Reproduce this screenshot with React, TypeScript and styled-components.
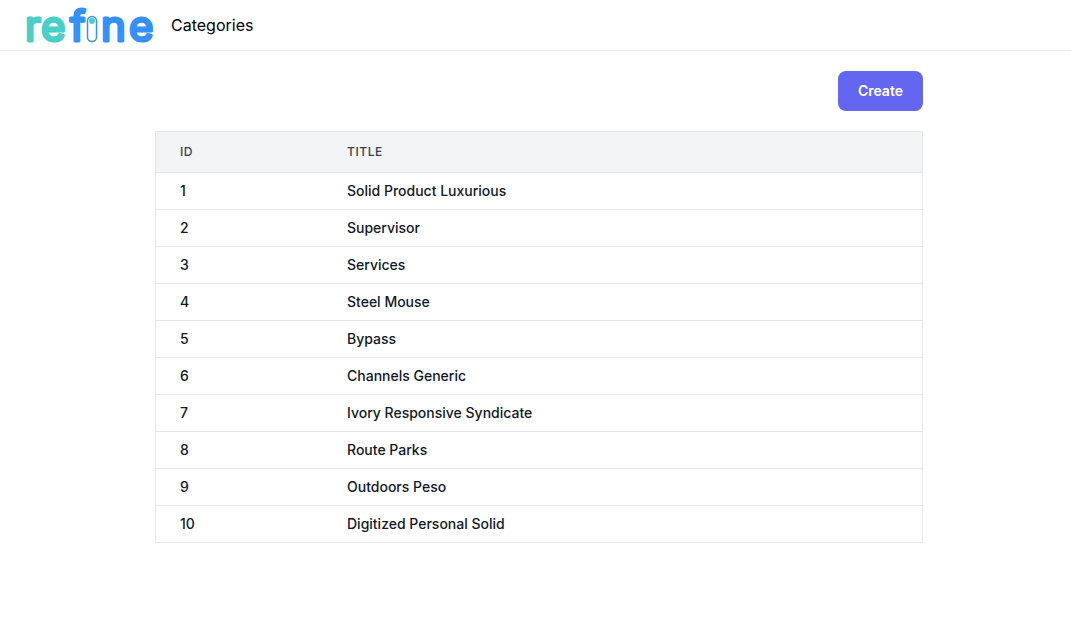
import React from "react";
import styled, { createGlobalStyle } from "styled-components";

const GlobalStyle = createGlobalStyle`
  *, *::before, *::after { box-sizing: border-box; }
  body {
    margin: 0;
    background: #ffffff;
    color: #000000;
    font-family: Inter, "Liberation Sans", sans-serif;
    font-size: 16px;
    line-height: 24px;
  }
`;

const NavBar = styled.nav`
  display: flex;
  align-items: center;
  gap: 16px;
  min-height: 51px;
  padding: 0 24px;
  border-bottom: 1px solid #e5e7eb;
`;

const HomeLink = styled.a`
  display: flex;
`;

const LogoSvg = styled.svg`
  display: block;
  overflow: visible;
`;

const Wordmark = styled.text`
  font-family: Inter, sans-serif;
  font-size: 42px;
  font-weight: 400;
  fill: currentColor;
  stroke: currentColor;
  stroke-width: 3;
  stroke-linejoin: round;
`;

const NavLink = styled.a`
  color: #000000;
  text-decoration: none;
`;

const Main = styled.main`
  padding: 20px 0 20px 7px;
`;

const Container = styled.div`
  display: flex;
  flex-direction: column;
  gap: 20px;
  max-width: 768px;
  margin: 0 auto;
`;

const CreateButton = styled.button`
  align-self: flex-end;
  height: 40px;
  padding: 0 20px;
  border: 0;
  border-radius: 8px;
  background: #6366f1;
  color: #ffffff;
  font: 600 14px/20px Inter, "Liberation Sans", sans-serif;
  cursor: pointer;
`;

const Table = styled.table`
  width: 100%;
  border: 1px solid #e5e7eb;
  border-spacing: 0;
  text-align: left;
`;

const HeaderCell = styled.th<{ $narrow?: boolean }>`
  width: ${(p) => (p.$narrow ? "167px" : "auto")};
  height: 41px;
  padding: 0 24px;
  border-bottom: 1px solid #e5e7eb;
  background: #f3f4f6;
  color: #374151;
  font-size: 12px;
  font-weight: 500;
  line-height: 16px;
  letter-spacing: 0.05em;
  text-transform: uppercase;
`;

const Row = styled.tr`
  &:not(:last-child) > td {
    border-bottom: 1px solid #e5e7eb;
  }
`;

const Cell = styled.td`
  padding: 8px 24px;
  color: #111827;
  font-size: 14px;
  font-weight: 500;
  line-height: 20px;
`;

const categories = [
  "Solid Product Luxurious",
  "Supervisor",
  "Services",
  "Steel Mouse",
  "Bypass",
  "Channels Generic",
  "Ivory Responsive Syndicate",
  "Route Parks",
  "Outdoors Peso",
  "Digitized Personal Solid",
].map((title, index) => ({ id: index + 1, title }));

function Logo() {
  return (
    <LogoSvg width="131" height="50" viewBox="0 0 131 50" role="img" aria-label="refine">
      <Wordmark color="#47d0c7" x="1 17" y="41">re</Wordmark>
      <Wordmark color="#3490fb" x="46 77 105" y="41">fne</Wordmark>
      <rect x="63.5" y="16.5" width="9" height="25" rx="4.5" fill="#ffffff" stroke="#3490fb" strokeWidth="1.5" />
      <circle cx="68" cy="21" r="3" fill="#47d0c7" />
    </LogoSvg>
  );
}

export default function App() {
  return (
    <>
      <GlobalStyle />
      <NavBar>
        <HomeLink href="#">
          <Logo />
        </HomeLink>
        <NavLink href="#categories">Categories</NavLink>
      </NavBar>
      <Main>
        <Container>
          <CreateButton type="button">Create</CreateButton>
          <Table>
            <thead>
              <tr>
                <HeaderCell scope="col" $narrow>ID</HeaderCell>
                <HeaderCell scope="col">Title</HeaderCell>
              </tr>
            </thead>
            <tbody>
              {categories.map((category) => (
                <Row key={category.id}>
                  <Cell>{category.id}</Cell>
                  <Cell>{category.title}</Cell>
                </Row>
              ))}
            </tbody>
          </Table>
        </Container>
      </Main>
    </>
  );
}
